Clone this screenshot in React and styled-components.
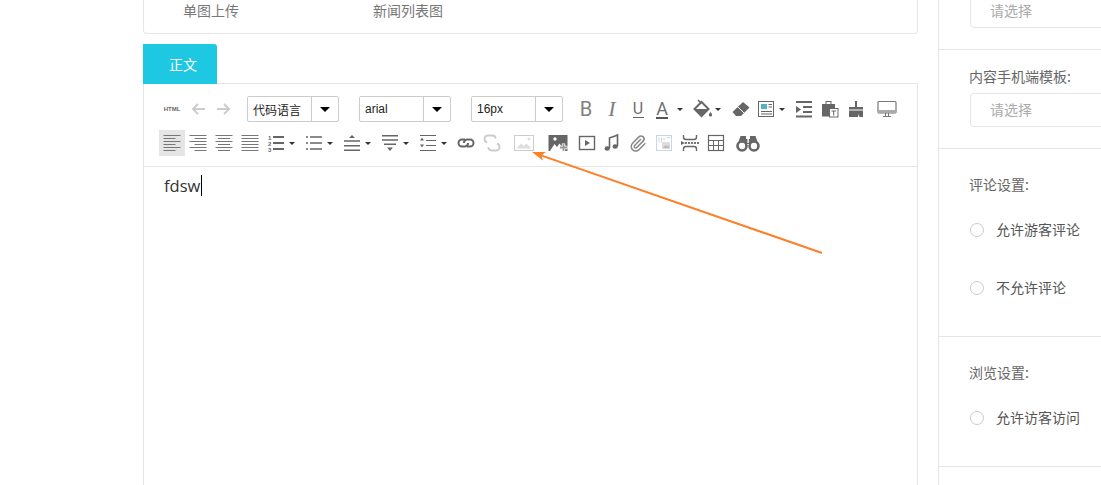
import React from 'react'
import styled, { createGlobalStyle } from 'styled-components'

const Global = createGlobalStyle`
  html, body { margin: 0; padding: 0; background: #fff; overflow: hidden; }
  body { font-family: "Noto Sans CJK SC", "Liberation Sans", sans-serif; }
`

const Page = styled.div`
  position: relative;
  display: flex;
  width: 1101px;
  height: 485px;
  padding-left: 143px;
  box-sizing: border-box;
  overflow: hidden;
`

const Main = styled.div`
  display: flex;
  flex-direction: column;
  width: 775px;
  margin-right: 20px;
`

const CoverCard = styled.div`
  display: grid;
  grid-template-columns: 190px 190px;
  height: 34px;
  box-sizing: border-box;
  padding-left: 39px;
  border: 1px solid #e6e6e6;
  border-top: none;
  border-radius: 0 0 4px 4px;
  font-size: 14px;
  line-height: 20px;
  color: #777;
`

const TabBar = styled.div`
  display: flex;
  height: 39px;
  margin-top: 10px;
  border-bottom: 1px solid #e6e6e6;
`

const Tab = styled.div`
  width: 74px;
  height: 40px;
  box-sizing: border-box;
  padding-left: 6px;
  background: #1fc8e2;
  border-radius: 0 3px 0 0;
  color: #fff;
  font-size: 14px;
  line-height: 40px;
  text-align: center;
`

const Editor = styled.div`
  flex: 1;
  border: 1px solid #e6e6e6;
  border-top: none;
  border-bottom: none;
`

const Toolbar = styled.div`
  display: flex;
  flex-direction: column;
  gap: 8px;
  padding: 12px 0 10px 15px;
  border-bottom: 1px solid #e6e6e6;
`

const ToolRow = styled.div`
  display: flex;
  align-items: center;
  height: 26px;
`

const ToolButton = styled.div`
  display: flex;
  flex: none;
  align-items: center;
  justify-content: center;
  width: ${p => p.$w || 26}px;
  height: 26px;
  margin-left: ${p => p.$ml || 0}px;
  background: ${p => (p.$active ? '#e5e5e5' : 'transparent')};
`

const HtmlLabel = styled.span`
  font-family: "Liberation Sans", sans-serif;
  font-size: 6px;
  font-weight: 700;
  color: #666;
`

const BoldGlyph = styled.span`
  font-family: Roboto, sans-serif;
  font-size: 20px;
  line-height: 24px;
  color: #808080;
`

const ItalicGlyph = styled.span`
  font-family: "Liberation Serif", serif;
  font-style: italic;
  font-size: 22px;
  line-height: 24px;
  color: #808080;
`

const UnderGlyph = styled.span`
  display: block;
  width: ${p => p.$w}px;
  box-sizing: border-box;
  border-bottom: ${p => p.$bar}px solid ${p => p.$barColor};
  font-family: Roboto, sans-serif;
  font-size: ${p => p.$size}px;
  line-height: 17px;
  text-align: center;
  color: #707070;
`

const Caret = styled.i`
  flex: none;
  width: 0;
  height: 0;
  margin-left: ${p => p.$ml || 0}px;
  margin-right: ${p => p.$mr || 0}px;
  border-style: solid;
  border-width: 3px 3px 0;
  border-color: #333 transparent transparent;
`

const Select = styled.div`
  display: flex;
  flex: none;
  align-items: center;
  width: 92px;
  height: 26px;
  box-sizing: border-box;
  margin-left: ${p => p.$ml}px;
  border: 1px solid #ccc;
  border-radius: 2px;
  font-family: "Liberation Sans", "Noto Sans CJK SC", sans-serif;
  font-size: 12px;
  color: #222;
`

const SelectText = styled.span`
  flex: 1;
  padding-left: 5px;
  white-space: nowrap;
`

const SelectArrow = styled.span`
  display: flex;
  align-items: center;
  justify-content: center;
  width: 26px;
  height: 100%;
  border-left: 1px solid #ccc;

  &::after {
    content: "";
    border-style: solid;
    border-width: 5px 5px 0;
    border-color: #000 transparent transparent;
  }
`

const Content = styled.div`
  display: flex;
  align-items: center;
  padding: 8px 0 0 20px;
  font-family: "Open Sans", sans-serif;
  font-size: 16.5px;
  line-height: 21px;
  color: #333;
`

const TextCursor = styled.span`
  width: 1px;
  height: 21px;
  margin-left: 1px;
  background: #000;
`

const Sidebar = styled.div`
  flex: 1;
  border-left: 1px solid #e6e6e6;
  overflow: hidden;
`

const Section = styled.div`
  display: flex;
  flex-direction: column;
  justify-content: flex-end;
  gap: 7px;
  height: ${p => (p.$h ? p.$h + 'px' : 'auto')};
  padding: ${p => p.$pad};
  border-bottom: 1px solid #e6e6e6;
`

const FieldLabel = styled.div`
  margin-left: -1px;
  font-size: 14px;
  line-height: 20px;
  color: #666;
  white-space: nowrap;
`

const SideSelect = styled.div`
  flex: none;
  width: 200px;
  height: 34px;
  box-sizing: border-box;
  padding-left: 19px;
  border: 1px solid #e6e6e6;
  border-radius: 4px;
  font-size: 14px;
  line-height: 30px;
  color: #aaa;
`

const RadioRow = styled.div`
  display: flex;
  align-items: center;
  gap: 12px;
  height: 58px;
  font-size: 14px;
  color: #555;
  white-space: nowrap;
`

const RadioText = styled.span`
  margin-top: -2px;
`

const RadioDot = styled.span`
  flex: none;
  width: 14px;
  height: 14px;
  box-sizing: border-box;
  border: 1px solid #ccc;
  border-radius: 50%;
`

const ArrowOverlay = styled.svg`
  position: absolute;
  top: 0;
  left: 0;
  pointer-events: none;
`

const Ic = ({ w = 20, children }) => (
  <svg width={w} height={20} viewBox={`0 0 ${w} 20`} fill="none" stroke="none">{children}</svg>
)

const DARK = '#666'
const OFF = '#ccc'

const Lines = ({ d, color = '#777', width = 1 }) => <path d={d} stroke={color} strokeWidth={width} />

const icons = {
  undo: <Ic><Lines color={OFF} width={2} d="M17 10H5M10 5l-5 5 5 5" /></Ic>,
  redo: <Ic><Lines color={OFF} width={2} d="M3 10h12M10 5l5 5-5 5" /></Ic>,
  bold: <BoldGlyph>B</BoldGlyph>,
  italic: <ItalicGlyph>I</ItalicGlyph>,
  underline: <UnderGlyph $w={11} $size={16} $bar={1} $barColor="#666">U</UnderGlyph>,
  fontColor: <UnderGlyph $w={12} $size={18} $bar={2} $barColor="#555">A</UnderGlyph>,
  bucket: (
    <Ic>
      <path d="M8.500 3l7 7-7 7-7-7z" fill="#fff" stroke="#666" strokeWidth="2" />
      <path d="M1.500 10h14l-7 7z" fill="#666" />
      <path d="M5 1l3 3" stroke="#666" strokeWidth="1.500" />
      <path d="M17.500 13c1.200 1.600 1.600 2.200 1.600 3a1.600 1.600 0 0 1-3.200 0c0-.8.400-1.400 1.600-3z" fill="#666" />
    </Ic>
  ),
  eraser: (
    <Ic>
      <path d="M12 3l6.500 5.500L10 17H5l-3.500-4z" fill="#666" />
      <path d="M7 8l6 6" stroke="#fff" strokeWidth="1" />
    </Ic>
  ),
  template: (
    <Ic>
      <rect x="2.500" y="2.500" width="15" height="15" stroke="#666" />
      <rect x="5" y="5" width="6" height="5" fill="#4db6c4" />
      <Lines color={DARK} d="M12.500 5.500H16M12.500 8H16M5 12.500h11M5 15h11" />
    </Ic>
  ),
  indent: (
    <Ic>
      <Lines color={DARK} width={2} d="M2 3h16M9 8h9M9 13h9M2 17.500h16" />
      <path d="M2 7l5 3.500L2 14z" fill="#666" />
    </Ic>
  ),
  paste: (
    <Ic>
      <rect x="2" y="5" width="13" height="12.500" fill="#666" />
      <rect x="6" y="2.500" width="5" height="3" stroke="#666" />
      <rect x="9.500" y="9.500" width="8.500" height="8.500" fill="#fff" stroke="#666" />
      <Lines color={DARK} d="M11.500 12h4.500M13.700 12v4.500" />
    </Ic>
  ),
  brush: (
    <Ic>
      <rect x="9" y="2" width="2" height="6" fill="#666" />
      <rect x="3" y="8" width="14" height="2.500" fill="#666" />
      <path d="M3 11.500h14V18h-3.500l-1-3-.5 3H3z" fill="#666" />
    </Ic>
  ),
  monitor: (
    <Ic>
      <rect x="1" y="2.500" width="18" height="11.500" rx="1" stroke="#777" strokeWidth="1.200" />
      <rect x="1" y="11" width="18" height="3" fill="#aaa" />
      <Lines color="#777" d="M8.500 14v3M11.500 14v3M6 17.500h8" />
    </Ic>
  ),
  alignLeft: <Ic><Lines d="M1.500 2.500h17M1.500 5.500h12M1.500 8.500h17M1.500 11.500h12M1.500 14.500h17M1.500 17.500h12" /></Ic>,
  alignRight: <Ic><Lines d="M1.500 2.500h17M6.500 5.500h12M1.500 8.500h17M6.500 11.500h12M1.500 14.500h17M6.500 17.500h12" /></Ic>,
  alignCenter: <Ic><Lines d="M1.500 2.500h17M4 5.500h12M1.500 8.500h17M4 11.500h12M1.500 14.500h17M4 17.500h12" /></Ic>,
  alignJustify: <Ic><Lines d="M1.500 2.500h17M1.500 5.500h17M1.500 8.500h17M1.500 11.500h17M1.500 14.500h17M1.500 17.500h17" /></Ic>,
  ol: (
    <Ic>
      <Lines color={DARK} width={2} d="M7 4h11M7 10h11M7 16h11" />
      <text x="2" y="6.500" fontFamily="Liberation Sans, sans-serif" fontWeight="700" fontSize="6" fill="#666">1</text>
      <text x="2" y="12.500" fontFamily="Liberation Sans, sans-serif" fontWeight="700" fontSize="6" fill="#666">2</text>
      <text x="2" y="18.500" fontFamily="Liberation Sans, sans-serif" fontWeight="700" fontSize="6" fill="#666">3</text>
    </Ic>
  ),
  ul: <Ic><Lines color={DARK} width={1.500} d="M2 4h2M6 4h12M2 10h2M6 10h12M2 16h2M6 16h12" /></Ic>,
  lineHeight: (
    <Ic>
      <path d="M10 2l3 3H7z" fill="#666" />
      <Lines color={DARK} width={1.600} d="M2 8h16M2 12.700h16M2 17.300h16" />
    </Ic>
  ),
  paraSpacing: (
    <Ic>
      <Lines color={DARK} width={1.600} d="M2 2.700h16M2 7h16M4 11.300h12" />
      <path d="M7 14.500h6l-3 3.500z" fill="#666" />
    </Ic>
  ),
  paraIndent: (
    <Ic>
      <Lines color={DARK} d="M2 2.500h16M8 7.500h10M8 12.500h10M2 17.500h16" />
      <path d="M4 4.500l2 3H2zM2 11.500h4l-2 3z" fill="#666" />
    </Ic>
  ),
  link: <Ic><Lines color={DARK} width={2} d="M9 6.500H6a3.500 3.500 0 0 0 0 7h3a3.500 3.500 0 0 0 3-3.500M11 13.500h3a3.500 3.500 0 0 0 0-7h-3a3.500 3.500 0 0 0-3 3.500" /></Ic>,
  unlink: <Ic><Lines color={OFF} width={2} d="M5 9.500C3 8.500 2.500 7 2.500 6A3.500 3.500 0 0 1 6 2.500h4.500a3 3 0 0 1 3 3M6.500 14a3 3 0 0 0 3 3.500H14a3.500 3.500 0 0 0 3.500-3.500c0-1.500-1-3-2.500-3.500" /></Ic>,
  image: (
    <Ic>
      <rect x="0.500" y="2.500" width="19" height="15" stroke={OFF} />
      <path d="M2.500 15.500l4.500-5 3 2.500 2.500-2.500 5 5z" fill="#ddd" />
      <circle cx="15" cy="6" r="1.500" fill="#ddd" />
    </Ic>
  ),
  imageUp: (
    <Ic>
      <rect x="0.500" y="2" width="19" height="16" fill="#666" />
      <path d="M2 18l4.500-7 2.500 3 2.500-3.500 5 7.500z" fill="#fff" />
      <circle cx="7" cy="6" r="1.700" fill="#fff" />
      <path d="M11.500 14.500h8M15.500 10.500v8" stroke="#fff" strokeWidth="3.400" />
      <path d="M12 14.500h7M15.500 11v7" stroke="#999" strokeWidth="1.800" />
    </Ic>
  ),
  video: (
    <Ic>
      <rect x="2.500" y="3.500" width="15" height="13" stroke="#666" strokeWidth="1.400" />
      <path d="M8 7l5 3-5 3z" fill="#666" />
    </Ic>
  ),
  music: (
    <Ic>
      <Lines color={DARK} width={1.600} d="M7.500 15V5c3-1 6-2 8-3v11" />
      <ellipse cx="5.200" cy="15.500" rx="2.600" ry="2.200" fill="#666" />
      <ellipse cx="13.200" cy="13.500" rx="2.600" ry="2.200" fill="#666" />
    </Ic>
  ),
  attach: (
    <Ic>
      <g transform="translate(1 1.500) scale(.75)">
        <path d="m16 6-8.414 8.586a2 2 0 0 0 2.829 2.829l8.414-8.586a4 4 0 1 0-5.657-5.657l-8.379 8.551a6 6 0 1 0 8.485 8.485l8.472-8.535" stroke="#888" strokeWidth="2" />
      </g>
    </Ic>
  ),
  scrawl: (
    <Ic>
      <rect x="2.500" y="2.500" width="15" height="15" stroke="#c6d6e8" />
      <Lines color="#c6d6e8" d="M5 4.500v5M7.500 4.500v5M10 4.500v3M13 4.500h3" />
      <rect x="8" y="9" width="8" height="7" fill="#ddd" />
      <path d="M9 15l2.500-3 1.500 1.500 1.500-1.500 1 3z" fill="#bbb" />
    </Ic>
  ),
  pagebreak: (
    <Ic>
      <Lines color={DARK} width={1.400} d="M3.500 2v2c0 1.500 1 2.500 2.500 2.500h8c1.500 0 2.500-1 2.500-2.500V2M3.500 18v-2c0-1.500 1-2.500 2.500-2.500h8c1.500 0 2.500 1 2.500 2.500v2" />
      <path d="M5 10h14" stroke="#777" strokeWidth="2" strokeDasharray="2 1" />
      <path d="M1 8l4 2-4 2z" fill="#666" />
    </Ic>
  ),
  table: (
    <Ic>
      <rect x="2.500" y="2.500" width="15" height="15" stroke="#666" strokeWidth="1.200" />
      <Lines color={DARK} d="M2.500 7.500h15M2.500 12.500h15M7.500 7.500v10M12.500 7.500v10" />
    </Ic>
  ),
  search: (
    <Ic w={24}>
      <circle cx="6" cy="13" r="4.500" stroke="#666" strokeWidth="2.600" />
      <circle cx="18" cy="13" r="4.500" stroke="#666" strokeWidth="2.600" />
      <path d="M4.500 3h5.500v6H2.500zM14 3h5.500l2 6H14z" fill="#666" />
      <rect x="9.500" y="6" width="5" height="7" fill="#666" />
      <rect x="11.400" y="5" width="1.400" height="5" fill="#fff" />
      <rect x="11.400" y="11" width="1.400" height="1.400" fill="#fff" />
    </Ic>
  ),
}

function Tool({ icon, ...rest }) {
  return <ToolButton {...rest}>{icons[icon]}</ToolButton>
}

function ToolSelect({ ml, children }) {
  return (
    <Select $ml={ml}>
      <SelectText>{children}</SelectText>
      <SelectArrow />
    </Select>
  )
}

function Radio({ children }) {
  return (
    <RadioRow>
      <RadioDot />
      <RadioText>{children}</RadioText>
    </RadioRow>
  )
}

export default function App() {
  return (
    <Page>
      <Global />
      <Main>
        <CoverCard>
          <span>单图上传</span>
          <span>新闻列表图</span>
        </CoverCard>
        <TabBar>
          <Tab>正文</Tab>
        </TabBar>
        <Editor>
          <Toolbar>
            <ToolRow>
              <ToolButton><HtmlLabel>HTML</HtmlLabel></ToolButton>
              <Tool icon="undo" />
              <Tool icon="redo" />
              <ToolSelect ml={10}>代码语言</ToolSelect>
              <ToolSelect ml={20}>arial</ToolSelect>
              <ToolSelect ml={20}>16px</ToolSelect>
              <Tool icon="bold" $ml={10} />
              <Tool icon="italic" />
              <Tool icon="underline" />
              <Tool icon="fontColor" $w={22} />
              <Caret $ml={4} />
              <Tool icon="bucket" $w={22} $ml={9} />
              <Caret $ml={1} />
              <Tool icon="eraser" $ml={7} />
              <Tool icon="template" $w={24} />
              <Caret $ml={1} />
              <Tool icon="indent" $ml={6} />
              <Tool icon="paste" />
              <Tool icon="brush" />
              <Tool icon="monitor" $w={35} />
            </ToolRow>
            <ToolRow>
              <Tool icon="alignLeft" $active />
              <Tool icon="alignRight" />
              <Tool icon="alignCenter" />
              <Tool icon="alignJustify" />
              <Tool icon="ol" />
              <Caret $mr={6} />
              <Tool icon="ul" />
              <Caret $mr={6} />
              <Tool icon="lineHeight" />
              <Caret $mr={6} />
              <Tool icon="paraSpacing" />
              <Caret $mr={6} />
              <Tool icon="paraIndent" />
              <Caret $mr={6} />
              <Tool icon="link" />
              <Tool icon="unlink" />
              <Tool icon="image" $w={37} />
              <Tool icon="imageUp" $w={32} />
              <Tool icon="video" $w={25} />
              <Tool icon="music" />
              <Tool icon="attach" />
              <Tool icon="scrawl" />
              <Tool icon="pagebreak" />
              <Tool icon="table" />
              <Tool icon="search" $w={38} />
            </ToolRow>
          </Toolbar>
          <Content>
            fdsw
            <TextCursor />
          </Content>
        </Editor>
      </Main>
      <Sidebar>
        <Section $h={28} $pad="0 0 21px 31px">
          <SideSelect>请选择</SideSelect>
        </Section>
        <Section $pad="16px 0 21px 31px">
          <FieldLabel>内容手机端模板:</FieldLabel>
          <SideSelect>请选择</SideSelect>
        </Section>
        <Section $pad="25px 0 19px 31px">
          <FieldLabel>评论设置:</FieldLabel>
          <div>
            <Radio>允许游客评论</Radio>
            <Radio>不允许评论</Radio>
          </div>
        </Section>
        <Section $pad="25px 0 19px 31px">
          <FieldLabel>浏览设置:</FieldLabel>
          <Radio>允许访客访问</Radio>
        </Section>
      </Sidebar>
      <ArrowOverlay width="1101" height="485" viewBox="0 0 1101 485">
        <path d="M822 253L541 155.4" stroke="#ff7f27" strokeWidth="2" />
        <path d="M532 152L545.8 152L541.5 155.4L542.8 160.5Z" fill="#ff7f27" />
      </ArrowOverlay>
    </Page>
  )
}
